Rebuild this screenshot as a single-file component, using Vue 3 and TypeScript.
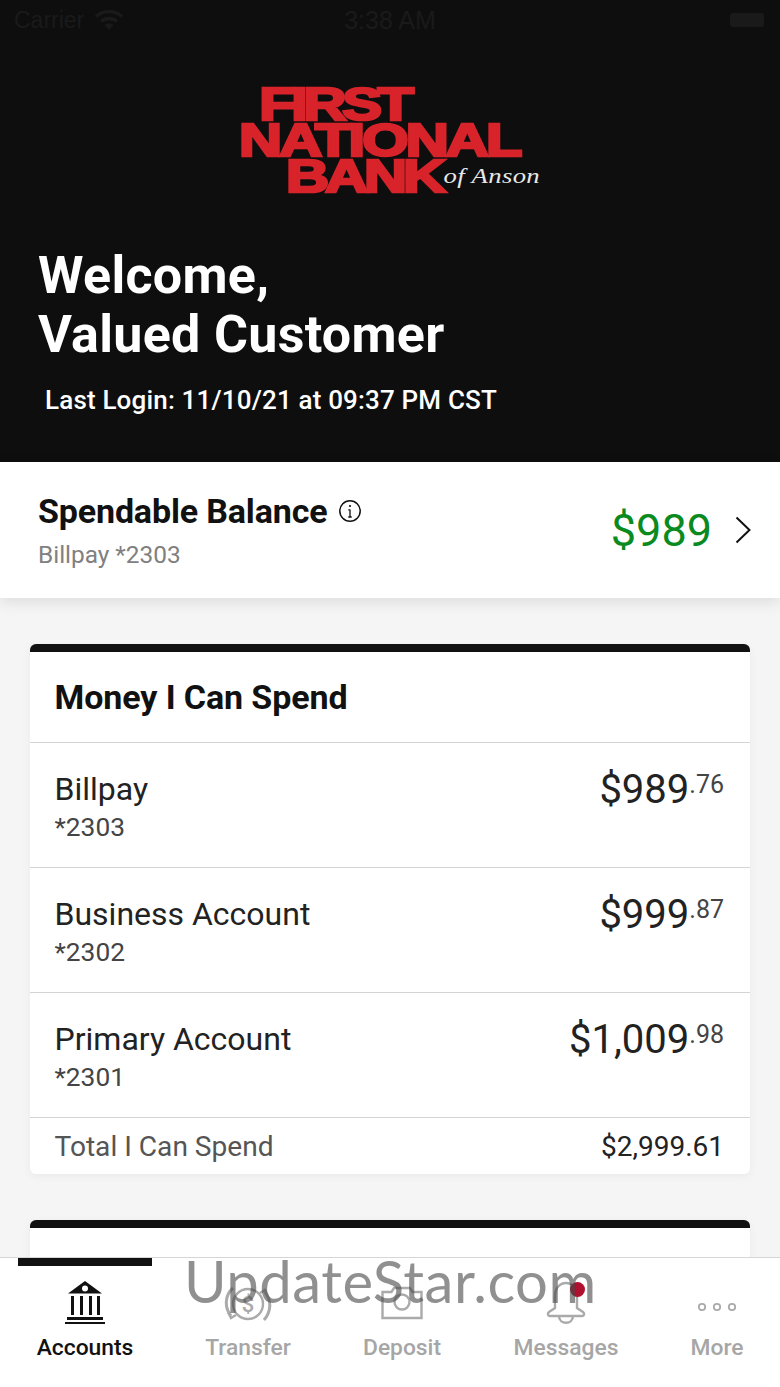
<script setup lang="ts">
interface Account { name: string; num: string; whole: string; cents: string }
const accounts: Account[] = [
  { name: 'Billpay', num: '*2303', whole: '$989', cents: '.76' },
  { name: 'Business Account', num: '*2302', whole: '$999', cents: '.87' },
  { name: 'Primary Account', num: '*2301', whole: '$1,009', cents: '.98' },
]
</script>

<template>
  <div class="app">
    <header class="hero">
      <div class="status">
        <div class="status-left">
          <span>Carrier</span>
          <svg width="30" height="22" viewBox="0 0 30 22" fill="none" stroke="#1a1a1a" stroke-width="3.4">
            <path d="M2 7.500c7.500-6.500 18.500-6.500 26 0" />
            <path d="M7 12.500c4.800-4 11.200-4 16 0" />
            <path d="M15 21l-4.500-5c2.700-2 6.300-2 9 0z" fill="#1a1a1a" stroke="none" />
          </svg>
        </div>
        <span class="status-time">3:38 AM</span>
        <div class="battery"></div>
      </div>
      <div class="logo">
        <div class="logo-first">FIRST</div>
        <div class="logo-national">NATIONAL</div>
        <div class="logo-bank">BANK<span class="logo-of">of Anson</span></div>
      </div>
      <h1 class="welcome">Welcome,<br />Valued Customer</h1>
      <p class="last-login">Last Login: 11/10/21 at 09:37 PM CST</p>
    </header>

    <section class="spendable">
      <div>
        <div class="spend-title">
          Spendable Balance
          <svg width="24" height="24" viewBox="0 0 24 24" fill="none" stroke="#111" stroke-width="1.500">
            <circle cx="12" cy="12" r="10.200" />
            <path d="M12 10.500v7.500M10.300 10.800H12M10.300 18h3.400" stroke-width="1.300" />
            <circle cx="12" cy="7" r="1.100" fill="#111" stroke="none" />
          </svg>
        </div>
        <div class="spend-sub">Billpay *2303</div>
      </div>
      <div class="spend-right">
        <span class="spend-amount">$989</span>
        <svg width="18" height="28" viewBox="0 0 18 28" fill="none" stroke="#111" stroke-width="2">
          <path d="M2.500 1.500 15.500 14 2.500 26.500" />
        </svg>
      </div>
    </section>

    <main class="content">
      <section class="card">
        <h2 class="card-title">Money I Can Spend</h2>
        <div v-for="a in accounts" :key="a.num" class="row">
          <div>
            <div class="row-name">{{ a.name }}</div>
            <div class="row-num">{{ a.num }}</div>
          </div>
          <div class="row-amount">{{ a.whole }}<span class="cents">{{ a.cents }}</span></div>
        </div>
        <div class="total">
          <span class="total-label">Total I Can Spend</span>
          <span class="total-value">$2,999.61</span>
        </div>
      </section>
      <section class="card card-next"></section>
    </main>

    <nav class="tabs">
      <div class="tab active">
        <svg width="42" height="44" viewBox="0 0 42 44" fill="#111">
          <path d="M21 1 38 13.500H4zM21 5.500a3 3 0 1 0 0 6 3 3 0 0 0 0-6z" fill-rule="evenodd" />
          <rect x="7" y="16" width="3" height="19" />
          <rect x="16" y="16" width="3" height="19" />
          <rect x="25" y="16" width="3" height="19" />
          <rect x="33" y="16" width="3" height="19" />
          <rect x="3" y="37" width="36" height="3" />
          <rect x="1" y="42" width="40" height="2" />
        </svg>
        <span>Accounts</span>
      </div>
      <div class="tab">
        <svg width="50" height="44" viewBox="0 0 50 44" fill="none" stroke="#aaa" stroke-width="2.400">
          <circle cx="25" cy="24" r="15" />
          <path d="M8 36C1 27 2 15 10 8M42 12c7 9 6 20-1 28" stroke-width="3" />
          <path d="M5 32l3 6 5-3M45 16l-3-6-5 3" />
          <text x="25" y="32" text-anchor="middle" class="dollar">$</text>
        </svg>
        <span>Transfer</span>
      </div>
      <div class="tab">
        <svg width="44" height="44" viewBox="0 0 44 44" fill="none" stroke="#aaa" stroke-width="2.400">
          <path d="M2.500 12h9l2.500-4h16l2.500 4h9v26h-39z" />
          <circle cx="22" cy="22" r="7.500" />
        </svg>
        <span>Deposit</span>
      </div>
      <div class="tab">
        <div class="bell">
          <svg width="42" height="44" viewBox="0 0 42 44" fill="none" stroke="#aaa" stroke-width="2.400">
            <path d="M10 28V16C10 8 15 3 21 3s11 5 11 13v12l6 4c2 1.500 1 4-1 4H5c-2 0-3-2.500-1-4z" />
            <path d="M14 36c0 9 14 9 14 0" />
          </svg>
          <i class="dot"></i>
        </div>
        <span>Messages</span>
      </div>
      <div class="tab">
        <svg width="42" height="44" viewBox="0 0 42 44" fill="none" stroke="#aaa" stroke-width="1.800">
          <circle cx="6" cy="27" r="3.200" />
          <circle cx="21" cy="27" r="3.200" />
          <circle cx="36" cy="27" r="3.200" />
        </svg>
        <span>More</span>
      </div>
      <div class="indicator"></div>
    </nav>

    <div class="watermark">UpdateStar.com</div>
  </div>
</template>

<style>
html, body { margin: 0; background: #f5f5f5; }
</style>

<style scoped>
.app {
  position: relative;
  width: 780px;
  height: 1387px;
  overflow: hidden;
  display: flex;
  flex-direction: column;
  background: #f5f5f5;
  font-family: Roboto, "Liberation Sans", sans-serif;
  color: #111;
}
.hero {
  height: 462px;
  flex: none;
  box-sizing: border-box;
  background: #0e0e0f;
  color: #fff;
  padding: 0 14px;
}
.status {
  height: 40px;
  display: flex;
  align-items: center;
  justify-content: space-between;
  position: relative;
  color: #1a1a1a;
  font-size: 23px;
  font-family: "Liberation Sans", sans-serif;
}
.status-left { display: flex; align-items: center; gap: 10px; }
.status-time { position: absolute; left: 0; right: 0; text-align: center; font-size: 25px; }
.battery {
  width: 34px;
  height: 14px;
  margin-right: 2px;
  border-radius: 3px;
  background: #1a1a1a;
}
.logo {
  height: 112px;
  margin: 46px 0 0 225px;
  font-family: "Liberation Sans", sans-serif;
  font-weight: 700;
  color: #d8232a;
  -webkit-text-stroke: 2.600px #d8232a;
  line-height: 36px;
  font-size: 47px;
  white-space: nowrap;
  transform: scaleX(1.27);
  transform-origin: left center;
}
.logo-first { margin-left: 16px; letter-spacing: -3.500px; }
.logo-national { letter-spacing: -2.300px; font-size: 47px; }
.logo-bank { margin-left: 37px; letter-spacing: -3.200px; display: flex; align-items: flex-end; }
.logo-of {
  font-family: "Liberation Serif", serif;
  font-style: italic;
  font-weight: 400;
  font-size: 21px;
  line-height: 24px;
  letter-spacing: 0.300px;
  color: #e8e8e8;
  -webkit-text-stroke: 0;
  margin: 0 0 6px 1px;
}
.welcome {
  margin: 48px 0 0 24px;
  font-size: 52px;
  line-height: 59px;
  font-weight: 700;
  letter-spacing: 0.300px;
}
.last-login {
  margin: 20px 0 0 31px;
  font-size: 26px;
  line-height: 32px;
  font-weight: 500;
  letter-spacing: 0.170px;
}
.spendable {
  height: 136px;
  flex: none;
  box-sizing: border-box;
  background: #fff;
  display: flex;
  align-items: center;
  justify-content: space-between;
  padding: 0 28px 0 38px;
  box-shadow: 0 4px 14px rgba(0, 0, 0, 0.1);
  position: relative;
  z-index: 1;
}
.spend-title {
  display: flex;
  align-items: center;
  gap: 11px;
  font-size: 34px;
  font-weight: 700;
  line-height: 40px;
  letter-spacing: -0.150px;
}
.spend-sub { margin-top: 10px; font-size: 24.400px; line-height: 28px; color: #808080; }
.spend-right { display: flex; align-items: center; gap: 22px; }
.spend-amount { font-size: 45px; color: #0a8a1f; }
.content {
  flex: 1;
  min-height: 0;
  overflow: hidden;
  padding: 46px 30px 0;
}
.card {
  background: #fff;
  border-top: 8px solid #111;
  border-radius: 6px;
  box-shadow: 0 2px 10px rgba(0, 0, 0, 0.05);
}
.card-next { height: 60px; margin-top: 46px; }
.card-title {
  margin: 0;
  height: 90px;
  box-sizing: border-box;
  padding: 0 24.500px;
  display: flex;
  align-items: center;
  font-size: 34px;
  font-weight: 700;
  letter-spacing: -0.100px;
}
.row {
  height: 125px;
  box-sizing: border-box;
  padding: 26px 26px 0 24.500px;
  border-top: 1.500px solid #d4d4d4;
  display: flex;
  justify-content: space-between;
}
.row-name { font-size: 32px; line-height: 40px; color: #222; }
.row-num { font-size: 26.300px; line-height: 36px; color: #444; }
.row-amount { font-size: 40px; line-height: 40px; color: #222; margin-top: 1px; }
.cents { font-size: 25px; vertical-align: 10px; line-height: 0; color: #444; }
.total {
  height: 57px;
  box-sizing: border-box;
  padding: 0 26px 0 24.500px;
  border-top: 1.500px solid #d4d4d4;
  display: flex;
  align-items: center;
  justify-content: space-between;
}
.total-label { font-size: 28.100px; color: #555; }
.total-value { font-size: 28px; color: #222; }
.tabs {
  position: relative;
  height: 130px;
  flex: none;
  box-sizing: border-box;
  background: #fff;
  border-top: 1.500px solid #d6d6d6;
  display: grid;
  grid-template-columns: 170px 156px 152px 176px 126px;
  padding-top: 22px;
}
.indicator {
  position: absolute;
  left: 18px;
  top: 0;
  width: 134px;
  height: 8px;
  background: #111;
}
.tab {
  display: flex;
  flex-direction: column;
  align-items: center;
  gap: 10px;
  font-size: 22.800px;
  line-height: 28px;
  font-weight: 500;
  color: #a6a6a6;
}
.tab.active { color: #111; }
.dollar { font: 500 22px Roboto, sans-serif; fill: #aaa; stroke: none; }
.bell { position: relative; height: 44px; }
.dot {
  position: absolute;
  right: 2px;
  top: 2px;
  width: 15px;
  height: 15px;
  border-radius: 50%;
  background: #b0102f;
}
.watermark {
  position: absolute;
  left: 184px;
  top: 1241px;
  font-family: Lato, "Noto Sans", sans-serif;
  font-size: 58px;
  letter-spacing: 0.500px;
  line-height: 80px;
  color: rgba(70, 70, 70, 0.6);
  pointer-events: none;
  white-space: nowrap;
}
</style>
